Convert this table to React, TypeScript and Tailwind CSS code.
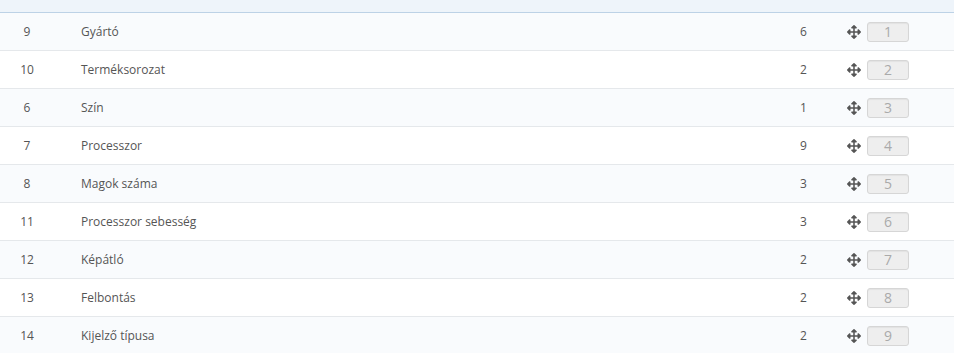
import React from "react";
import { FaArrowsAlt } from "react-icons/fa";

const rows = [
  { id: 9, name: "Gyártó", count: 6 },
  { id: 10, name: "Terméksorozat", count: 2 },
  { id: 6, name: "Szín", count: 1 },
  { id: 7, name: "Processzor", count: 9 },
  { id: 8, name: "Magok száma", count: 3 },
  { id: 11, name: "Processzor sebesség", count: 3 },
  { id: 12, name: "Képátló", count: 2 },
  { id: 13, name: "Felbontás", count: 2 },
  { id: 14, name: "Kijelző típusa", count: 2 },
];

export default function App() {
  return (
    <div
      className="w-[954px] h-[353px] overflow-hidden bg-white text-[12px] text-[#555]"
      style={{ fontFamily: '"Open Sans", "Noto Sans", sans-serif' }}
    >
      <div className="h-[13px] bg-[#eef4fa] border-b border-[#bdd2e6]" />
      {rows.map((r, i) => (
        <div
          key={r.id}
          className={`flex items-center h-[38px] border-b border-[#e5e8eb] ${
            i % 2 === 0 ? "bg-[#f9fbfd]" : "bg-white"
          }`}
        >
          <div className="w-[54px] text-center">{r.id}</div>
          <div className="pl-[27px] flex-1">{r.name}</div>
          <div className="w-[20px] text-left">{r.count}</div>
          <div className="w-[27px]" />
          <FaArrowsAlt className="text-[#555] w-[14px] h-[14px]" />
          <div className="w-[6px]" />
          <div className="w-[42px] h-[20px] rounded-[3px] bg-[#eeeeee] border border-[#d6d6d6] shadow-[inset_0_1px_1px_rgba(0,0,0,0.05)] flex items-center justify-center text-[14px] text-[#aaa]">
            {i + 1}
          </div>
          <div className="w-[45px]" />
        </div>
      ))}
    </div>
  );
}
